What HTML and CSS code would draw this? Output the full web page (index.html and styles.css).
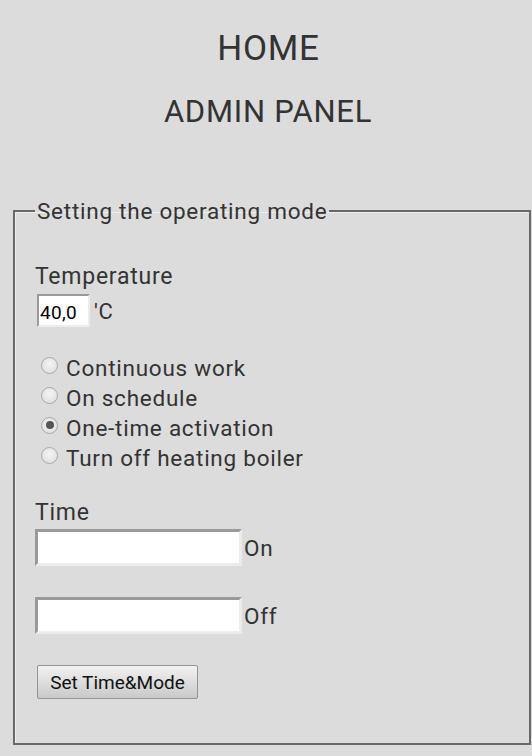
FILE: index.html
```html
<!DOCTYPE html>
<html>
<head>
<meta charset="utf-8">
<link rel="stylesheet" href="styles.css">
</head>
<body>
<h1 class="title">HOME</h1>
<h2 class="subtitle">ADMIN PANEL</h2>
<form class="form">
<fieldset class="box">
<legend class="legend">Setting the operating mode</legend>
<div class="label">Temperature</div>
<div class="temp-row"><input class="temp-input" type="text" value="40,0"><span class="unit">'C</span></div>
<div class="radios">
<label class="radio-row"><span class="radio"></span>Continuous work</label>
<label class="radio-row"><span class="radio"></span>On schedule</label>
<label class="radio-row"><span class="radio checked"></span>One-time activation</label>
<label class="radio-row"><span class="radio"></span>Turn off heating boiler</label>
</div>
<div class="label time-label">Time</div>
<div class="time-row"><input class="time-input" type="text"><span class="suffix">On</span></div>
<div class="time-row off"><input class="time-input" type="text"><span class="suffix">Off</span></div>
<button class="btn" type="button">Set Time&amp;Mode</button>
</fieldset>
</form>
</body>
</html>
```
FILE: styles.css
```css
html, body {
  margin: 0;
  padding: 0;
  background: #dcdcdc;
}
body {
  font-family: Roboto, "Liberation Sans", sans-serif;
  color: #333;
  letter-spacing: 0.75px;
  padding-top: 29px;
}
.title {
  margin: 0;
  padding-left: 5px;
  font-size: 35px;
  line-height: 40px;
  font-weight: 400;
  text-align: center;
}
.subtitle {
  margin: 25px 0 0;
  padding-left: 4px;
  font-size: 31px;
  line-height: 36px;
  font-weight: 400;
  text-align: center;
}
.form {
  margin: 0;
  padding-top: 68px;
}
.box {
  margin: 0 1px 0 13px;
  border: 2px solid #686868;
  box-shadow: inset 1px 1px 0 #efefef;
  padding: 40px 20px 44px 20px;
  min-width: 0;
}
.legend {
  font-size: 22.5px;
  padding: 0 2px;
  margin-left: 0;
  color: #333;
}
.label {
  font-size: 23px;
  line-height: 26px;
}
.temp-row {
  display: flex;
  align-items: baseline;
  margin-top: 4px;
}
.temp-input {
  width: 53px;
  height: 33px;
  box-sizing: border-box;
  margin: 0 0 0 2px;
  padding: 4px 1px 0;
  border: 2px solid;
  border-color: #9a9a9a #ececec #ececec #9a9a9a;
  background: #fff;
  font-family: Roboto, "Liberation Sans", sans-serif;
  font-size: 19px;
  letter-spacing: 0.3px;
  color: #000;
}
.unit {
  font-size: 22px;
  margin-left: 4px;
}
.radios {
  margin-top: 26px;
  display: flex;
  flex-direction: column;
}
.radio-row {
  display: flex;
  align-items: center;
  height: 30px;
  font-size: 22.5px;
}
.radio {
  width: 17px;
  height: 17px;
  box-sizing: border-box;
  border-radius: 50%;
  border: 1px solid #a8a8a8;
  background: radial-gradient(circle at 50% 40%, #f4f4f4, #dadada);
  margin: -6px 8px 0 6px;
  position: relative;
  flex: none;
}
.radio.checked::after {
  content: "";
  position: absolute;
  left: 3.5px;
  top: 3.5px;
  width: 8px;
  height: 8px;
  border-radius: 50%;
  background: #555;
}
.time-label {
  margin-top: 27px;
}
.time-row {
  display: flex;
  align-items: center;
  margin-top: 3px;
}
.time-row.off {
  margin-top: 31px;
}
.time-input {
  width: 207px;
  height: 37px;
  box-sizing: border-box;
  margin: 0;
  border: 3px solid;
  border-color: #9a9a9a #ececec #ececec #9a9a9a;
  background: #fff;
}
.suffix {
  font-size: 22.5px;
  margin-left: 2px;
}
.btn {
  display: block;
  margin: 31px 0 0 2px;
  width: 161px;
  height: 34px;
  border: 1px solid #949494;
  border-radius: 2px;
  background: linear-gradient(#f2f2f2, #c9c9c9);
  font-family: Roboto, "Liberation Sans", sans-serif;
  font-size: 19px;
  letter-spacing: 0;
  color: #111;
  padding: 0;
}
```
